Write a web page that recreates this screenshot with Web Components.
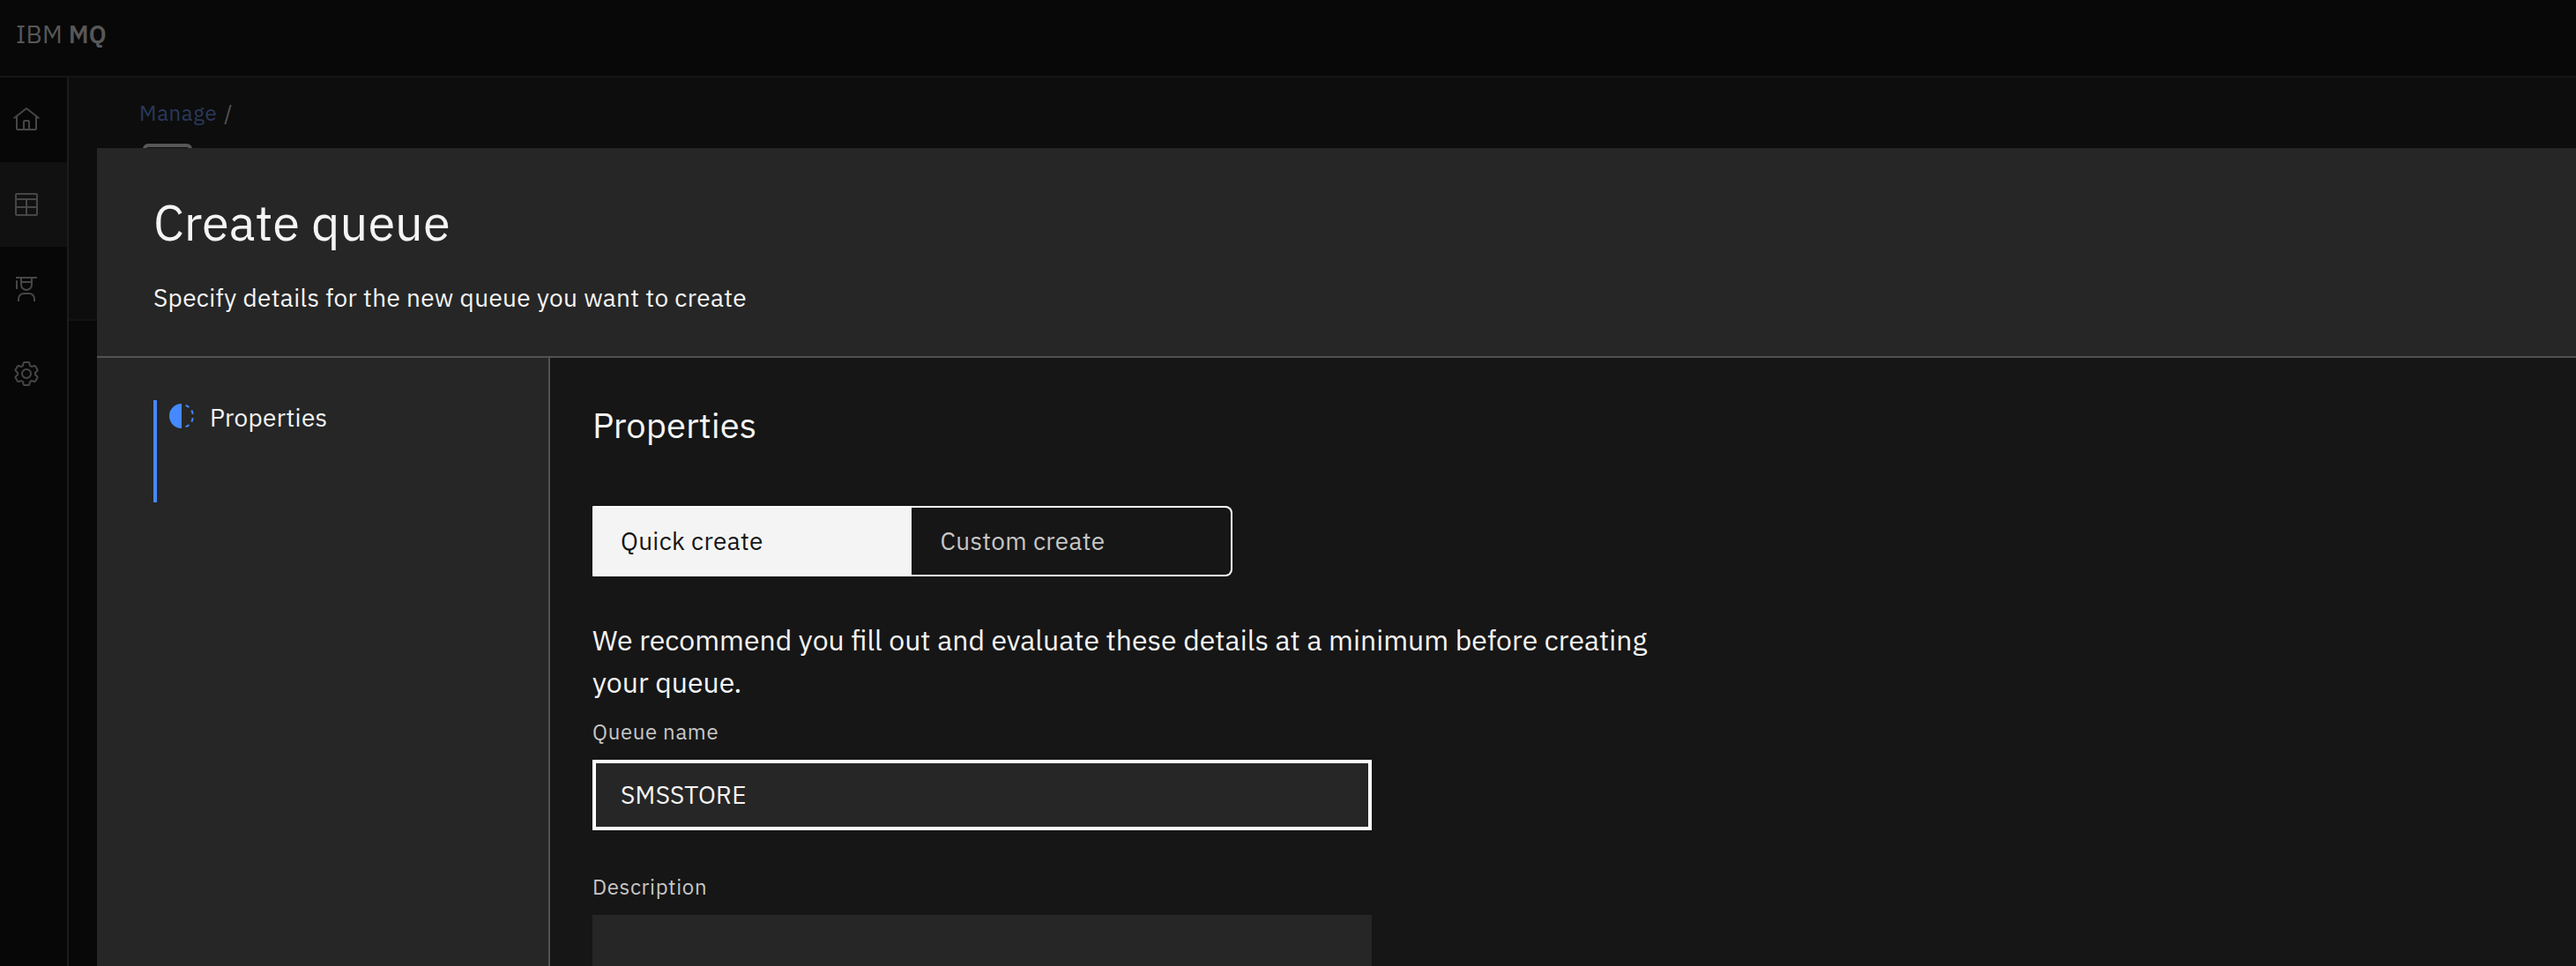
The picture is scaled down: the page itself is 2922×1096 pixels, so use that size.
<!DOCTYPE html>
<html lang="en">
<head>
<meta charset="utf-8">
<title>IBM MQ</title>
<style>
html, body { height: 100%; }
body { margin: 0; overflow: hidden; background: #080808; font-family: "IBM Plex Sans", "Open Sans", sans-serif; color: #f4f4f4; }
</style>
</head>
<body>
<mq-app>
  <mq-header slot="header" prefix="IBM" product="MQ"></mq-header>
  <mq-side-nav slot="nav">
    <mq-nav-item icon="home"></mq-nav-item>
    <mq-nav-item icon="table" active></mq-nav-item>
    <mq-nav-item icon="education"></mq-nav-item>
    <mq-nav-item icon="settings"></mq-nav-item>
  </mq-side-nav>
  <mq-breadcrumb slot="page">Manage</mq-breadcrumb>
  <mq-tearsheet slot="overlay" heading="Create queue" description="Specify details for the new queue you want to create">
    <mq-step slot="steps">Properties</mq-step>
    <h3>Properties</h3>
    <mq-switcher></mq-switcher>
    <p>We recommend you fill out and evaluate these details at a minimum before creating your queue.</p>
    <mq-field label="Queue name" value="SMSSTORE" focused></mq-field>
    <mq-field label="Description" multiline></mq-field>
  </mq-tearsheet>
</mq-app>
<script>
const define = (name, render) => customElements.define(name, class extends HTMLElement {
  connectedCallback() {
    if (this.shadowRoot) return;
    this.attachShadow({ mode: "open" }).innerHTML = "<style>*{box-sizing:border-box}</style>" + render(this);
  }
});

const ICONS = {
  home: '<path d="M16.6123,2.2138a1.01,1.01,0,0,0-1.2427,0L1,13.4194l1.2427,1.5717L4,13.6208V26a2.0041,2.0041,0,0,0,2,2H26a2.0037,2.0037,0,0,0,2-2V13.63L29.7573,15,31,13.4282ZM18,26H14V18h4Zm2,0V18a2.0023,2.0023,0,0,0-2-2H14a2.002,2.002,0,0,0-2,2v8H6V12.0615l10-7.79,10,7.8005V26Z"/>',
  table: '<path d="M27,3H5A2,2,0,0,0,3,5V27a2,2,0,0,0,2,2H27a2,2,0,0,0,2-2V5A2,2,0,0,0,27,3Zm0,2V9H5V5ZM17,11H27v7H17Zm-2,7H5V11H15ZM5,20H15v7H5Zm12,7V20H27v7Z"/>',
  education: '<path d="M26,30H24V27a5,5,0,0,0-5-5H13a5,5,0,0,0-5,5v3H6V27a7,7,0,0,1,7-7h6a7,7,0,0,1,7,7Z"/><path d="M5,6A1,1,0,0,0,4,7v9H6V7A1,1,0,0,0,5,6Z"/><path d="M4,2V4H9v7a7,7,0,0,0,14,0V4h5V2ZM11,4H21V7H11Zm5,12a5,5,0,0,1-5-5V9H21v2A5,5,0,0,1,16,16Z"/>',
  settings: '<path d="M27,16.76c0-.25,0-.5,0-.76s0-.51,0-.77l1.92-1.68A2,2,0,0,0,29.3,11L26.94,7a2,2,0,0,0-1.73-1,2,2,0,0,0-.64.1l-2.43.82a11.35,11.35,0,0,0-1.31-.75l-.51-2.52a2,2,0,0,0-2-1.61H13.64a2,2,0,0,0-2,1.61l-.51,2.52a11.48,11.48,0,0,0-1.32.75L7.43,6.06A2,2,0,0,0,6.79,6,2,2,0,0,0,5.06,7L2.7,11a2,2,0,0,0,.41,2.51L5,15.24c0,.25,0,.5,0,.76s0,.51,0,.77L3.11,18.45A2,2,0,0,0,2.7,21L5.06,25a2,2,0,0,0,1.73,1,2,2,0,0,0,.64-.1l2.43-.82a11.35,11.35,0,0,0,1.31.75l.51,2.52a2,2,0,0,0,2,1.61h4.72a2,2,0,0,0,2-1.61l.51-2.52a11.48,11.48,0,0,0,1.32-.75l2.42.82a2,2,0,0,0,.64.1,2,2,0,0,0,1.73-1L29.3,21a2,2,0,0,0-.41-2.51ZM25.21,24l-3.43-1.16a8.86,8.86,0,0,1-2.71,1.57L18.36,28H13.64l-.71-3.55a9.36,9.36,0,0,1-2.7-1.57L6.79,24,4.43,20l2.72-2.4a8.9,8.9,0,0,1,0-3.13L4.43,12,6.79,8l3.43,1.16a8.86,8.86,0,0,1,2.71-1.57L13.64,4h4.72l.71,3.55a9.36,9.36,0,0,1,2.7,1.57L25.21,8,27.57,12l-2.72,2.4a8.9,8.9,0,0,1,0,3.13L27.57,20Z"/><path d="M16,22a6,6,0,1,1,6-6A5.94,5.94,0,0,1,16,22Zm0-10a3.91,3.91,0,0,0-4,4,3.91,3.91,0,0,0,4,4,3.91,3.91,0,0,0,4-4A3.91,3.91,0,0,0,16,12Z"/>',
  incomplete: '<path d="M23.7642 6.8593l1.2851-1.5315A13.976 13.976 0 0020.8672 2.887l-.6836 1.8776A11.9729 11.9729 0 0123.7642 6.8593zM27.81 14l1.9677-.4128A13.8888 13.8888 0 0028.14 9.0457L26.4087 10A12.52 12.52 0 0127.81 14zM20.1836 27.2354l.6836 1.8776a13.976 13.976 0 004.1821-2.4408l-1.2851-1.5315A11.9729 11.9729 0 0120.1836 27.2354zM26.4087 22L28.14 23a14.14 14.14 0 001.6382-4.5872L27.81 18.0659A12.1519 12.1519 0 0126.4087 22zM16 30V2a14 14 0 000 28z"/>'
};
const icon = name => `<svg width="32" height="32" viewBox="0 0 32 32" fill="currentColor" aria-hidden="true">${ICONS[name]}</svg>`;

define("mq-app", () => `<style>
  :host { display: flex; flex-direction: column; height: 100vh; position: relative; overflow: hidden; }
  .row { flex: 1; display: flex; min-height: 0; }
  main { flex: 1; display: flex; flex-direction: column; }
  .top { height: 276px; background: #0d0d0d; border-bottom: 2px solid #131313; }
  .overlay { position: absolute; left: 110px; top: 168px; right: 0; bottom: 0; display: flex; }
</style><slot name="header"></slot>
<div class="row"><slot name="nav"></slot><main><div class="top"><slot name="page"></slot></div></main></div>
<div class="overlay"><slot name="overlay"></slot></div>`);

define("mq-header", e => `<style>
  :host { display: block; box-sizing: border-box; height: 88px; padding-left: 18px; border-bottom: 2px solid #151515; background: #080808; color: #575757; font-size: 28px; letter-spacing: .2px; line-height: 77px; white-space: pre; }
  b { font-weight: 600; }
</style>${e.getAttribute("prefix")} <b>${e.getAttribute("product")}</b>`);

define("mq-side-nav", () => `<style>
  :host { display: flex; flex-direction: column; box-sizing: border-box; width: 78px; border-right: 2px solid #1c1c1c; background: #070707; }
</style><slot></slot>`);

define("mq-nav-item", e => `<style>
  :host { display: flex; align-items: center; box-sizing: border-box; height: 96px; padding-left: 14px; color: #464646; }
  :host([active]) { background: #111; }
</style>${icon(e.getAttribute("icon"))}`);

define("mq-breadcrumb", () => `<style>
  :host { display: block; padding-left: 80px; font-size: 24px; letter-spacing: .64px; line-height: 80px; color: #575757; }
  nav { display: flex; gap: 8px; height: 75px; }
  a { color: #29395a; }
  .edge { width: 56px; height: 40px; margin-left: 4px; border: 4px solid #575757; border-radius: 6px; }
</style><nav><a><slot></slot></a><span>/</span></nav><div class="edge"></div>`);

define("mq-tearsheet", e => `<style>
  :host { flex: 1; display: flex; flex-direction: column; background: #262626; color: #f4f4f4; }
  header { box-sizing: border-box; height: 238px; padding: 48px 64px 0; border-bottom: 2px solid #525252; }
  h2 { margin: 0; font-size: 56px; font-weight: 400; line-height: 72px; }
  header p { margin: 30px 0 0; font-size: 28px; line-height: 40px; letter-spacing: .32px; }
  .body { flex: 1; display: flex; min-height: 0; }
  aside { box-sizing: border-box; width: 514px; padding: 48px 64px; border-right: 2px solid #525252; }
  main { flex: 1; padding: 48px; background: #161616; overflow: hidden; }
  ::slotted(h3) { margin: 0 0 64px; font-size: 40px; font-weight: 400; line-height: 56px; }
  ::slotted(p) { margin: 48px 0 16px; width: 1216px; font-size: 32px; line-height: 48px; }
</style><header><h2>${e.getAttribute("heading")}</h2><p>${e.getAttribute("description")}</p></header>
<div class="body"><aside><slot name="steps"></slot></aside><main><slot></slot></main></div>`);

define("mq-step", () => `<style>
  :host { display: flex; gap: 16px; box-sizing: border-box; height: 116px; padding-left: 12px; border-left: 4px solid #4589ff; font-size: 28px; line-height: 40px; letter-spacing: .32px; }
  svg { flex: none; margin-top: 2px; color: #4589ff; }
</style>${icon("incomplete")}<slot></slot>`);

define("mq-switcher", () => `<style>
  :host { display: flex; box-sizing: border-box; width: 726px; height: 80px; border: 2px solid #fff; border-left-color: #f4f4f4; border-radius: 0 8px 8px 0; font-size: 28px; line-height: 75px; letter-spacing: .32px; }
  span { flex: none; box-sizing: border-box; width: 360px; padding-left: 30px; }
  .on { background: #f4f4f4; color: #161616; }
  .off { padding-left: 32.5px; color: #c6c6c6; }
</style><span class="on">Quick create</span><span class="off">Custom create</span>`);

define("mq-field", e => {
  const label = e.getAttribute("label"), value = e.getAttribute("value") || "";
  return `<style>
  :host { display: flex; flex-direction: column; gap: 16px; width: 884px; margin-bottom: 48px; }
  label { color: #c6c6c6; font-size: 24px; line-height: 32px; letter-spacing: .64px; }
  .box { box-sizing: border-box; height: 80px; padding: 0 32px; background: #262626; color: #f4f4f4; font-size: 28px; line-height: 79px; letter-spacing: .32px; }
  :host([focused]) .box { border: 4px solid #fff; padding: 0 28px; line-height: 71px; }
  :host([multiline]) .box { height: 160px; }
</style><label>${label}</label><div class="box">${value}</div>`;
});
</script>
</body>
</html>
